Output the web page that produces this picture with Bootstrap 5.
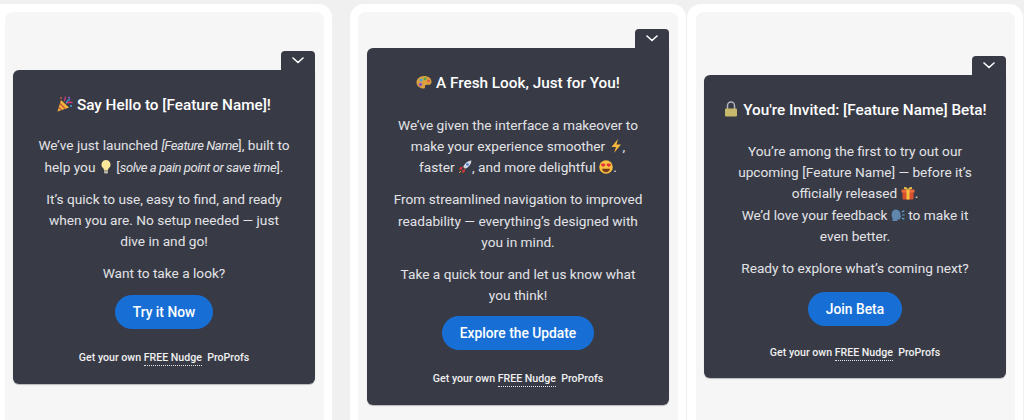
<!DOCTYPE html>
<html>
<head>
    <title>Nudge templates</title>
    <link rel="stylesheet" href="https://cdn.jsdelivr.net/npm/bootstrap@5.3.3/dist/css/bootstrap.min.css">
    <script src="https://cdn.jsdelivr.net/npm/bootstrap@5.3.3/dist/js/bootstrap.bundle.min.js"></script>
    <style>
        html, body { height: 420px; overflow: hidden; }
        body { background: #f0f0f0; font-family: Roboto, "Liberation Sans", sans-serif; }
        .tile-strip { height: 420px; padding-top: 4px; }
        .tile-frame { height: 416px; flex: none; background: #fff; border-radius: 14px 14px 0 0; padding: 8px 8px 0; }
        .tile-first { width: 332px; padding-left: 5px; border-top-left-radius: 0; }
        .tile-first .nudge-box { margin-left: -1px; }
        .tile-second { width: 336px; margin-left: 18px; }
        .tile-third { width: 336px; margin-left: 1px; padding-left: 9px; }
        .tile-third .nudge-box { margin-left: -1px; }
        .tile-inner { height: 408px; padding-top: 2.5px; background: #f6f6f6; border-radius: 8px 8px 0 0; }
        .nudge-box { width: 302px; }
        .nudge-toggle { width: 34px; height: 19px; background: #383b46; border-radius: 4px 4px 0 0; padding: 0; border: 0; }
        .nudge-body { background: #383b46; border-radius: 6px 0 6px 6px; padding: 23px 24.5px 19px; color: #e3e3e6; font-size: 13.66px; line-height: 21.3px; box-shadow: 0 1px 1px rgba(0,0,0,.25); }
        .nudge-body em { font-size: 13px; letter-spacing: -.45px; }
        .nudge-title { font-size: 15.3px; line-height: 24px; font-weight: 500; color: #fff; margin: 0 -14px 18.6px; white-space: nowrap; }
        .nudge-body p { margin-bottom: 10.65px; }
        .nudge-body p:last-of-type { margin-bottom: 10.05px; }
        .nudge-cta { display: block; margin: 0 auto; background: #176fd6; color: #fff; border: 0; border-radius: 18px; height: 34px; padding: 0 18px; font-size: 13.8px; font-weight: 500; line-height: 34px; }
        .nudge-cta:hover { background: #176fd6; color: #fff; }
        .nudge-foot { font-size: 10.6px; line-height: 15px; font-weight: 500; margin-top: 21px; color: #f0f0f0; white-space: nowrap; }
        .free-link { border-bottom: 1px dotted #e6e6e6; padding-bottom: 1px; }
        .emo { display: inline-block; width: 14px; height: 14px; vertical-align: -2px; }
        .nudge-title .emo { width: 16px; height: 16px; vertical-align: -2px; }
        .tile-second .nudge-title { margin-bottom: 19.6px; }
        .tile-third .nudge-body { padding-bottom: 18px; }
        .tile-third .nudge-body p:last-of-type { margin-bottom: 13px; }
        .tile-third .nudge-foot { margin-top: 19px; }
    </style>
</head>
<body>
<div class="tile-strip d-flex">

    <div class="tile-frame tile-first">
        <div class="tile-inner d-flex align-items-center justify-content-center">
            <div class="nudge-box">
                <div class="d-flex justify-content-end">
                    <button class="nudge-toggle d-flex align-items-center justify-content-center"><svg width="12" height="7" viewBox="0 0 12 7"><path d="M1 1l5 4.500L11 1" fill="none" stroke="#fff" stroke-width="1.600" stroke-linecap="round"/></svg></button>
                </div>
                <div class="nudge-body text-center">
                    <div class="nudge-title"><svg class="emo" viewBox="0 0 16 16"><path d="M.5 15.500L4 4l8 7.500z" fill="#f2b63c"/><path d="M2 11.500l2.500 2.500M3 7.500l5 5" stroke="#c9503a" stroke-width="1.300"/><path d="M7 5c1.500-1 1-2.500 1.500-4.500M9.500 7.500c1.500-1.500 3.500-1.500 6-1" fill="none" stroke="#d0397c" stroke-width="1.300"/><path d="M9 7c1-2 2-3 4-3.500" fill="none" stroke="#3fa7e0" stroke-width="1.200"/><circle cx="12" cy="1.800" r="1.100" fill="#8a5fd0"/><circle cx="14" cy="10" r="1" fill="#3fa7e0"/><circle cx="4" cy="2" r=".9" fill="#e2574c"/></svg> Say Hello to [Feature Name]!</div>
                    <p>We’ve just launched <em>[Feature Name</em>], built to help you <svg class="emo" viewBox="0 0 14 14"><path d="M7 0a4.600 4.600 0 0 0-3 8c.8.700 1 1.500 1 2.500h4c0-1 .2-1.800 1-2.500a4.600 4.600 0 0 0-3-8z" fill="#fbe79a"/><rect x="5" y="10.800" width="4" height="2.700" rx="1" fill="#b9b6ab"/></svg> [<em>solve a pain point or save time</em>].</p>
                    <p>It’s quick to use, easy to find, and ready when you are. No setup needed — just dive in and go!</p>
                    <p>Want to take a look?</p>
                    <button class="btn nudge-cta">Try it Now</button>
                    <div class="nudge-foot">Get your own <span class="free-link">FREE Nudge</span>&nbsp; ProProfs</div>
                </div>
            </div>
        </div>
    </div>

    <div class="tile-frame tile-second">
        <div class="tile-inner d-flex align-items-center justify-content-center">
            <div class="nudge-box">
                <div class="d-flex justify-content-end">
                    <button class="nudge-toggle d-flex align-items-center justify-content-center"><svg width="12" height="7" viewBox="0 0 12 7"><path d="M1 1l5 4.500L11 1" fill="none" stroke="#fff" stroke-width="1.600" stroke-linecap="round"/></svg></button>
                </div>
                <div class="nudge-body text-center">
                    <div class="nudge-title"><svg class="emo" viewBox="0 0 16 16"><path d="M8 2C3.500 2 .5 5 .5 8.500S4 14.500 7.500 14.500c2 0 1.500-1.500 1.500-2.500 0-1.200 1.500-1.200 3-1.200 2 0 3.500-.8 3.500-2.800C15.500 4 12 2 8 2z" fill="#d9a23f"/><circle cx="5" cy="6" r="1.500" fill="#4f9fd8"/><circle cx="9" cy="4.800" r="1.400" fill="#4aa84e"/><circle cx="12.500" cy="7" r="1.400" fill="#e2574c"/><circle cx="4.500" cy="10.500" r="1.700" fill="#8a4fc8"/></svg> A Fresh Look, Just for You!</div>
                    <p>We’ve given the interface a makeover to make your experience smoother <svg class="emo" viewBox="0 0 14 14"><path d="M9 0L2.500 8H7l-2 6 7-8.500H7.500z" fill="#f5b83d"/></svg>, faster <svg class="emo" viewBox="0 0 14 14"><path d="M13.500.5c-4 .3-6.800 2.800-8.300 6.300l2 2c3.500-1.500 6-4.300 6.300-8.300z" fill="#d5d8e2"/><path d="M5.200 6.800l-3 .5L.8 10l3-.5zM7.200 8.800l-.5 3-2.700 1.500.5-3z" fill="#d9392f"/><path d="M3.300 10.700c-1 .3-1.800 1-2.500 2.500 1.500-.7 2.200-1.500 2.500-2.500z" fill="#f5b83d"/><circle cx="9.500" cy="4.500" r="1.300" fill="#3f78c9"/></svg>, and more delightful <svg class="emo" viewBox="0 0 14 14"><circle cx="7" cy="7" r="6.800" fill="#f7c03f"/><path d="M4.200 3.800c-.9-.9-2.500 0-2.100 1.300.3.800 1.300 1.500 2.100 2 .8-.5 1.800-1.200 2.100-2 .4-1.300-1.200-2.200-2.100-1.300zM9.800 3.800c-.9-.9-2.500 0-2.100 1.300.3.800 1.300 1.500 2.100 2 .8-.5 1.800-1.200 2.100-2 .4-1.300-1.200-2.200-2.100-1.300z" fill="#e0323c"/><path d="M3 8.800h8c-.4 2.200-2 3.400-4 3.400s-3.600-1.200-4-3.400z" fill="#7a3b1d"/></svg>.</p>
                    <p>From streamlined navigation to improved readability — everything’s designed with you in mind.</p>
                    <p>Take a quick tour and let us know what you think!</p>
                    <button class="btn nudge-cta">Explore the Update</button>
                    <div class="nudge-foot">Get your own <span class="free-link">FREE Nudge</span>&nbsp; ProProfs</div>
                </div>
            </div>
        </div>
    </div>

    <div class="tile-frame tile-third">
        <div class="tile-inner d-flex align-items-center justify-content-center">
            <div class="nudge-box">
                <div class="d-flex justify-content-end">
                    <button class="nudge-toggle d-flex align-items-center justify-content-center"><svg width="12" height="7" viewBox="0 0 12 7"><path d="M1 1l5 4.500L11 1" fill="none" stroke="#fff" stroke-width="1.600" stroke-linecap="round"/></svg></button>
                </div>
                <div class="nudge-body text-center">
                    <div class="nudge-title"><svg class="emo" viewBox="0 0 16 16"><path d="M4.500 8V4.500a3.500 3.500 0 0 1 7 0V8" fill="none" stroke="#aeb4bd" stroke-width="1.500"/><rect x="2" y="7.500" width="12" height="8" rx="1" fill="#c9b96d"/></svg> You're Invited: [Feature Name] Beta!</div>
                    <p>You’re among the first to try out our upcoming [Feature Name] — before it’s officially released <svg class="emo" viewBox="0 0 14 14"><rect x="1.500" y="5.500" width="11" height="8" rx="1" fill="#d9512c"/><rect x=".5" y="3.500" width="13" height="3" rx=".6" fill="#ee6a3c"/><rect x="5.500" y="3.500" width="3" height="10" fill="#f5c33f"/><path d="M7 3.500C5.500.5 2.500.5 3 2.500c.2.800 2 1 4 1zM7 3.500c1.500-3 4.500-3 4-1-.2.800-2 1-4 1z" fill="#f5c33f"/></svg>.<br>We’d love your feedback <svg class="emo" viewBox="0 0 14 14"><path d="M5 1.500a4.800 4.800 0 0 1 4.500 5.200c0 1 .9 1.300.5 2.300-.3.700-.9.500-.9 1.400 0 1.300-1.300 1.300-2.800 1v1.600H1.500V10C0 8 .2 1.500 5 1.500z" fill="#5f86ad"/><path d="M10.800 4l2.500-1.300M11.300 7h2.200M10.800 10l2.500 1.300" stroke="#5fa8dc" stroke-width="1.200"/></svg> to make it even better.</p>
                    <p>Ready to explore what’s coming next?</p>
                    <button class="btn nudge-cta">Join Beta</button>
                    <div class="nudge-foot">Get your own <span class="free-link">FREE Nudge</span>&nbsp; ProProfs</div>
                </div>
            </div>
        </div>
    </div>

</div>
</body>
</html>
